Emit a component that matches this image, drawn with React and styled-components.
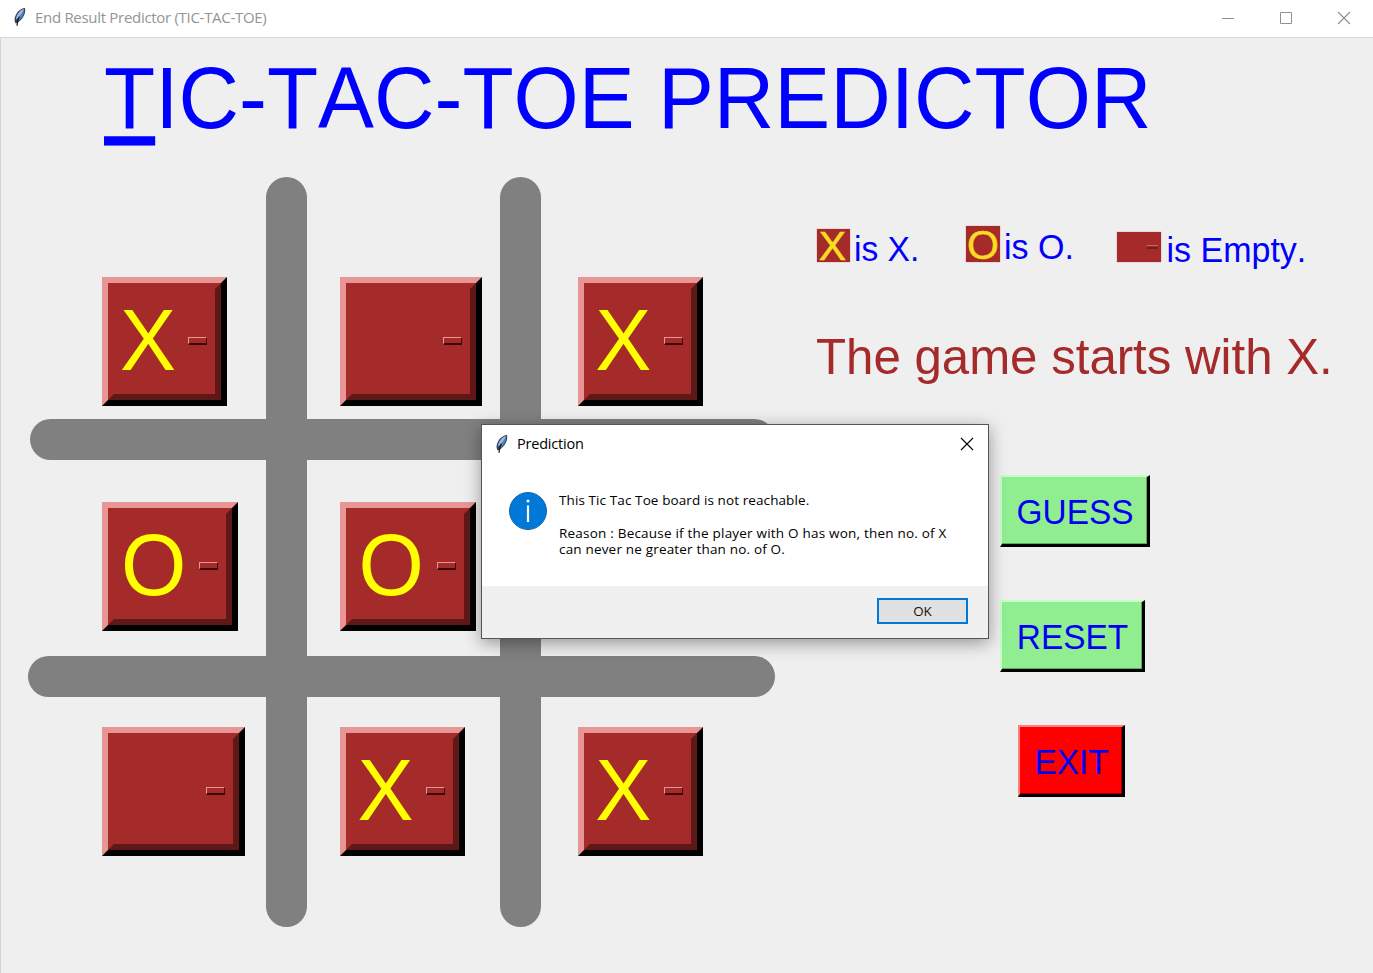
import React from "react";
import styled, { createGlobalStyle, css } from "styled-components";

const GlobalStyle = createGlobalStyle`
  * { box-sizing: border-box; }
  html, body { margin: 0; padding: 0; background: #efefef; overflow: hidden; }
`;

const arial = `"Liberation Sans", Arial, sans-serif`;
const segoe = `"Open Sans", "Noto Sans", sans-serif`;

const Window = styled.div`
  position: relative;
  width: 1373px;
  height: 973px;
  display: flex;
  flex-direction: column;
  background: #efefef;
  font-family: ${arial};
  font-kerning: none;
  white-space: nowrap;
`;

const TitleBar = styled.header`
  height: 37px;
  flex: none;
  display: flex;
  align-items: center;
  background: #fff;
  padding: 0 0 3px 12px;
`;

const TitleText = styled.span`
  font-family: ${segoe};
  font-size: ${(p) => p.$size}px;
  letter-spacing: ${(p) => p.$spacing}px;
  color: ${(p) => p.$color};
  line-height: 20px;
  margin-left: 7px;
  flex: 1;
`;

const Controls = styled.div`
  display: flex;
  align-items: center;
  gap: 44px;
  padding: 1px 22px 0 0;
  svg { display: block; }
`;

const Content = styled.main`
  flex: 1;
  border-top: 1px solid #d5d5d5;
  border-left: 1px solid #d5d5d5;
  display: flex;
  flex-direction: column;
`;

const Heading = styled.h1`
  margin: 0;
  padding: 13px 0 0 103px;
  height: 139px;
  font-weight: 400;
  font-size: 83.8px;
  line-height: 97px;
  color: #00f;
  transform: scaleY(1.035);
  transform-origin: 0 91px;
`;

const Mnemonic = styled.span`
  text-decoration: underline;
  text-decoration-thickness: 8.5px;
  text-underline-offset: 8px;
  text-decoration-skip-ink: none;
`;

const Columns = styled.div`
  display: flex;
`;

const Board = styled.section`
  position: relative;
  width: 749px;
  height: 750px;
  margin-left: 26px;
  padding: 100px 0 0 75.4px;
  display: grid;
  grid-template-columns: 237.5px 237.7px 1fr;
  grid-template-rows: 225px 225px 225px;
  align-items: start;
  justify-items: start;
`;

const Bar = styled.i`
  position: absolute;
  background: #808080;
  border-radius: 20.5px;
  ${(p) =>
    p.$vertical
      ? css`top: 0; bottom: 0; width: 41px; left: ${p.$at}px;`
      : css`left: ${p.$start}px; right: 1px; height: 41px; top: ${p.$at}px;`}
`;

const Tile = styled.button`
  position: relative;
  padding: 0;
  width: ${(p) => p.$width}px;
  height: 128.5px;
  border: 6px solid;
  border-color: #e79595 #000 #000 #e79595;
  background: #a52a2a;
  font-family: ${arial};
  color: #ff0;
`;

const TileFace = styled.span`
  display: flex;
  align-items: center;
  justify-content: space-between;
  height: 100%;
  border: 6px solid;
  border-color: #a52a2a #5f1818 #5f1818 #a52a2a;
  padding: 0 8px 0 5.6px;
`;

const Mark = styled.span`
  font-size: 84px;
  line-height: 96px;
  height: 98px;
  margin-left: ${(p) => (p.$round ? 1 : 0)}px;
  transform: scaleY(1.04);
`;

const Handle = styled.span`
  width: 19px;
  height: 8px;
  margin-left: auto;
  border: 1px solid;
  border-color: #e79595 #3d0808 #3d0808 #e79595;
  border-bottom-width: 2px;
  background: #a52a2a;
`;

const Side = styled.aside`
  display: flex;
  flex-direction: column;
  padding: 48px 0 0 41px;
`;

const Legend = styled.div`
  display: flex;
  align-items: flex-end;
  height: 37px;
`;

const LegendItem = styled.div`
  display: flex;
  align-items: flex-end;
  width: ${(p) => p.$width}px;
`;

const Swatch = styled.span`
  display: flex;
  align-items: center;
  justify-content: center;
  width: ${(p) => p.$w}px;
  height: ${(p) => p.$h}px;
  background: #a52a2a;
  box-shadow: 0 0 1px #c56a6a;
  color: #fbdc22;
  font-size: 41px;
  line-height: ${(p) => p.$h}px;
  -webkit-text-stroke: 0.5px #fbdc22;
`;

const SwatchMark = styled.span`
  display: block;
  transform: translate(${(p) => p.$shift || 0}px, 1px);
`;

const MiniHandle = styled.span`
  width: 11px;
  height: 4px;
  margin: 0 3px 0 auto;
  border-top: 1px solid #c56565;
  border-bottom: 2px solid #761c1c;
`;

const LegendText = styled.span`
  font-size: ${(p) => p.$size || 34}px;
  line-height: 40px;
  height: 40px;
  color: #00f;
  margin: 0 0 ${(p) => p.$lift || -7.5}px ${(p) => p.$gap || 4}px;
  transform: scaleY(1.04);
`;

const Tagline = styled.p`
  margin: 65px 0 0 -1px;
  font-size: 49.2px;
  line-height: 58px;
  color: #a52a2a;
  transform: scaleY(1.03);
`;

const Actions = styled.div`
  display: flex;
  flex-direction: column;
  gap: 53px;
  padding: 90px 0 0 183px;
`;

const Action = styled.button`
  width: ${(p) => p.$width}px;
  height: 72px;
  margin-left: ${(p) => p.$indent || 0}px;
  padding: 2px 0 0 1px;
  border: 2px solid;
  border-color: ${(p) => p.$light} #000 #000 ${(p) => p.$light};
  border-right-width: 3px;
  border-bottom-width: 3px;
  box-shadow: inset -1px -1px 0 ${(p) => p.$dark};
  background: ${(p) => p.$bg};
  color: #0000f0;
  font: 33.4px/40px ${arial};
  font-kerning: none;
`;

const ActionLabel = styled.span`
  display: block;
  transform: scaleY(1.05);
`;

const Dialog = styled.div`
  position: absolute;
  left: 481px;
  top: 424px;
  width: 508px;
  height: 215px;
  border: 1px solid #555;
  background: #fff;
  display: flex;
  flex-direction: column;
  box-shadow: 0 4px 16px rgba(0, 0, 0, 0.38);
`;

const DialogTitle = styled.div`
  height: 37px;
  display: flex;
  align-items: center;
  padding: 0 14px 0 12px;
`;

const DialogBody = styled.div`
  flex: 1;
  display: flex;
  padding: 30px 0 0 27px;
`;

const Message = styled.div`
  margin: 0 0 0 12px;
  font-family: ${segoe};
  font-size: 13.5px;
  line-height: 16.2px;
  color: #000;
  p { margin: 0 0 17px; }
`;

const Line = styled.span`
  display: block;
  letter-spacing: ${(p) => p.$spacing}px;
`;

const DialogFooter = styled.div`
  height: 52px;
  background: #f0f0f0;
  display: flex;
  justify-content: flex-end;
  padding: 12px 20px 0 0;
`;

const OkButton = styled.button`
  width: 91px;
  height: 26px;
  border: 2px solid #0078d7;
  background: #e1e1e1;
  padding: 0;
  font: 13.4px/20px ${segoe};
  letter-spacing: -0.1px;
  color: #111;
`;

const Feather = () => (
  <svg width="16" height="20" viewBox="0 0 16 20">
    <path d="M12.9 1C8.3 1.4 4 5.6 2.8 10.8c-.5 2.2-.2 4.1 1 5.6 3.8-1.4 7.8-5.6 9-10.2.6-2 .5-3.8.1-5.2z" fill="#2c4260" />
    <path d="M12.2 2C8 3 4.4 7.2 3.8 12.6 7 10.4 10.8 6.4 12.2 2z" fill="#9dbbdd" />
    <path d="M12.3 3.6C12 8.6 8.8 13.2 5.2 14.9 6.2 11 9.2 6.8 12.3 3.6z" fill="#4f80bd" />
    <path d="M7.4 9.8C6 12.4 5.2 15 5 18.8" stroke="#111820" strokeWidth="1.2" fill="none" />
  </svg>
);

const Cross = ({ color }) => (
  <svg width="14" height="14" viewBox="0 0 14 14">
    <path d="M1 1l12 12M13 1L1 13" stroke={color} strokeWidth="1.1" fill="none" />
  </svg>
);

const tiles = ["X", "", "X", "O", "O", "", "", "X", "X"];
const tileWidth = { X: 125, O: 136, "": 142.5 };

export default function App() {
  return (
    <Window>
      <GlobalStyle />
      <TitleBar>
        <Feather />
        <TitleText $size={15} $spacing={-0.3} $color="#949494">
          End Result Predictor (TIC-TAC-TOE)
        </TitleText>
        <Controls>
          <svg width="14" height="14"><path d="M1 7.5h12" stroke="#8f8f8f" /></svg>
          <svg width="14" height="14"><path d="M1.5 1.5h11v11h-11z" stroke="#8f8f8f" fill="none" /></svg>
          <Cross color="#8f8f8f" />
        </Controls>
      </TitleBar>
      <Content>
        <Heading><Mnemonic>T</Mnemonic>IC-TAC-TOE PREDICTOR</Heading>
        <Columns>
          <Board>
            <Bar $vertical $at={239} />
            <Bar $vertical $at={473} />
            <Bar $start={3} $at={242} />
            <Bar $start={1} $at={479} />
            {tiles.map((mark, i) => (
              <Tile key={i} $width={tileWidth[mark]}>
                <TileFace>
                  {mark && <Mark $round={mark === "O"}>{mark}</Mark>}
                  <Handle />
                </TileFace>
              </Tile>
            ))}
          </Board>
          <Side>
            <Legend>
              <LegendItem $width={149}>
                <Swatch $w={33} $h={33}><SwatchMark $shift={-1}>X</SwatchMark></Swatch>
                <LegendText $size={33.6}>is X.</LegendText>
              </LegendItem>
              <LegendItem $width={151}>
                <Swatch $w={34} $h={36}><SwatchMark>O</SwatchMark></Swatch>
                <LegendText $lift={-5}>is O.</LegendText>
              </LegendItem>
              <LegendItem $width={200}>
                <Swatch $w={44} $h={30}><MiniHandle /></Swatch>
                <LegendText $gap={5.5}>is Empty.</LegendText>
              </LegendItem>
            </Legend>
            <Tagline>The game starts with X.</Tagline>
            <Actions>
              <Action $width={150} $bg="#90ee90" $light="#c8fdc8" $dark="#5fa85f">
                <ActionLabel>GUESS</ActionLabel>
              </Action>
              <Action $width={145} $bg="#90ee90" $light="#c8fdc8" $dark="#5fa85f">
                <ActionLabel>RESET</ActionLabel>
              </Action>
              <Action $width={107} $indent={18} $bg="#f00" $light="#ff8080" $dark="#990000">
                <ActionLabel>EXIT</ActionLabel>
              </Action>
            </Actions>
          </Side>
        </Columns>
      </Content>
      <Dialog>
        <DialogTitle>
          <Feather />
          <TitleText $size={14.5} $spacing={-0.2} $color="#000">Prediction</TitleText>
          <Cross color="#000" />
        </DialogTitle>
        <DialogBody>
          <svg width="38" height="38" viewBox="0 0 38 38">
            <circle cx="19" cy="19" r="18.5" fill="#0078d7" stroke="#1a69a8" />
            <path d="M19 13.5V30" stroke="#fff" strokeWidth="2.2" />
            <circle cx="19" cy="9" r="1.5" fill="#fff" />
          </svg>
          <Message>
            <p><Line $spacing={0.1}>This Tic Tac Toe board is not reachable.</Line></p>
            <Line $spacing={0.21}>Reason : Because if the player with O has won, then no. of X</Line>
            <Line $spacing={0.18}>can never ne greater than no. of O.</Line>
          </Message>
        </DialogBody>
        <DialogFooter><OkButton>OK</OkButton></DialogFooter>
      </Dialog>
    </Window>
  );
}
